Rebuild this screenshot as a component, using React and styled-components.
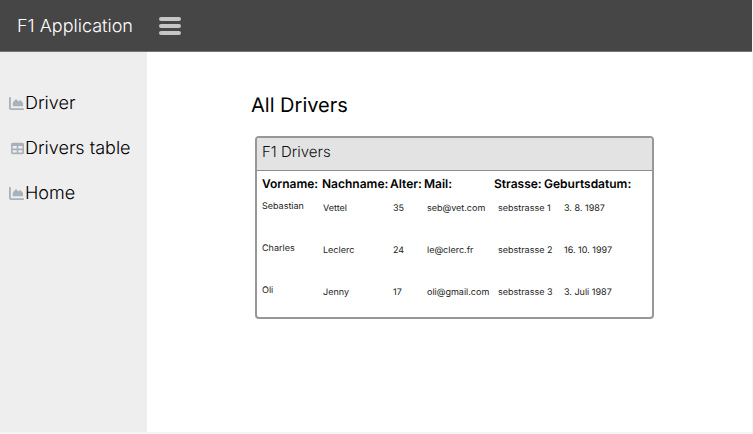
import React from "react";
import styled, { createGlobalStyle } from "styled-components";
import { FaChartArea, FaTable } from "react-icons/fa6";

const GlobalStyle = createGlobalStyle`
  *, *::before, *::after { box-sizing: border-box; }
  body {
    margin: 0;
    background: #f5f5f5;
    color: #000;
    font-family: Inter, "Liberation Sans", sans-serif;
    text-rendering: geometricPrecision;
  }
`;

const Page = styled.div`
  display: flex;
  flex-direction: column;
  min-height: 100vh;
  border-right: 1px solid #f5f5f5;
  border-bottom: 2px solid #f5f5f5;
`;

const TopBar = styled.header`
  display: flex;
  align-items: center;
  gap: 26px;
  height: 52px;
  padding: 0 17px;
  background: #464646;
  border-bottom: 1px solid #747474;
`;

const Brand = styled.span`
  color: #fff;
  font-size: 18px;
  font-weight: 300;
  line-height: 24px;
  padding-top: 2px;
`;

const MenuButton = styled.button`
  display: flex;
  flex-direction: column;
  gap: 3px;
  width: 22px;
  padding: 0;
  border: 0;
  background: none;
  cursor: pointer;
`;

const MenuBar = styled.span`
  height: 4px;
  border-radius: 2px;
  background: #c6c6c6;
`;

const Body = styled.div`
  display: flex;
  flex: 1;
`;

const Sidebar = styled.nav`
  flex: 0 0 147px;
  padding: 40px 9px;
  background: #eee;
`;

const NavList = styled.ul`
  display: flex;
  flex-direction: column;
  gap: 21px;
  margin: 0;
  padding: 0;
  list-style: none;
`;

const NavLink = styled.a`
  display: flex;
  align-items: center;
  color: #000;
  font-size: 18px;
  font-weight: 300;
  line-height: 24px;
  white-space: nowrap;
  text-decoration: none;
`;

const NavIcon = styled.span`
  display: flex;
  justify-content: flex-end;
  width: 15px;
  margin-right: 1px;
  padding-bottom: 2px;
  color: #a9b2ba;
`;

const Main = styled.main`
  flex: 1;
  padding: 41px 98px 40px 104px;
  background: #fff;
`;

const Title = styled.h1`
  margin: 0 0 19px;
  font-size: 20px;
  font-weight: 400;
  line-height: 24px;
`;

const Card = styled.section`
  margin-left: 4px;
  border: 2px solid #979797;
  border-radius: 4px;
  overflow: hidden;
  background: #fff;
`;

const CardTitle = styled.h2`
  margin: 0;
  padding: 4px 5px 8px;
  border-bottom: 1px solid #8c8c8c;
  background: #e3e3e3;
  color: #111;
  font-size: 15px;
  font-weight: 300;
  line-height: 20px;
`;

const Table = styled.table`
  width: 100%;
  table-layout: fixed;
  border-collapse: collapse;
`;

const Column = styled.col`
  width: ${({ $width }) => $width};
`;

const HeadCell = styled.th`
  padding: 5px 0 4px 5px;
  font-size: 12px;
  font-weight: 600;
  line-height: 16px;
  text-align: left;
  white-space: nowrap;
`;

const Cell = styled.td`
  height: 42px;
  padding: 7px 0 0 ${({ $indent }) => $indent};
  color: #222;
  font-size: 9px;
  line-height: 12px;
  vertical-align: top;
  white-space: nowrap;

  &:first-child {
    padding-top: 5px;
  }

  tr:last-child > & {
    height: 37px;
  }
`;

const links = [
  { label: "Driver", Icon: FaChartArea, size: 15 },
  { label: "Drivers table", Icon: FaTable, size: 13 },
  { label: "Home", Icon: FaChartArea, size: 15 },
];

const columns = [
  { label: "Vorname:", width: "60px", indent: "5px" },
  { label: "Nachname:", width: "68px", indent: "6px" },
  { label: "Alter:", width: "34px", indent: "8px" },
  { label: "Mail:", width: "70px", indent: "8px" },
  { label: "Strasse:", width: "50px", indent: "9px" },
  { label: "Geburtsdatum:", width: "auto", indent: "25px" },
];

const drivers = [
  ["Sebastian", "Vettel", "35", "seb@vet.com", "sebstrasse 1", "3. 8. 1987"],
  ["Charles", "Leclerc", "24", "le@clerc.fr", "sebstrasse 2", "16. 10. 1997"],
  ["Oli", "Jenny", "17", "oli@gmail.com", "sebstrasse 3", "3. Juli 1987"],
];

export default function App() {
  return (
    <>
      <GlobalStyle />
      <Page>
        <TopBar>
          <Brand>F1 Application</Brand>
          <MenuButton type="button" aria-label="Menu">
            <MenuBar />
            <MenuBar />
            <MenuBar />
          </MenuButton>
        </TopBar>
        <Body>
          <Sidebar>
            <NavList>
              {links.map(({ label, Icon, size }) => (
                <li key={label}>
                  <NavLink href="#">
                    <NavIcon>
                      <Icon size={size} aria-hidden="true" />
                    </NavIcon>
                    {label}
                  </NavLink>
                </li>
              ))}
            </NavList>
          </Sidebar>
          <Main>
            <Title>All Drivers</Title>
            <Card>
              <CardTitle>F1 Drivers</CardTitle>
              <Table>
                <colgroup>
                  {columns.map(({ label, width }) => (
                    <Column key={label} $width={width} />
                  ))}
                </colgroup>
                <thead>
                  <tr>
                    {columns.map(({ label }) => (
                      <HeadCell key={label} scope="col">{label}</HeadCell>
                    ))}
                  </tr>
                </thead>
                <tbody>
                  {drivers.map((driver) => (
                    <tr key={driver[0]}>
                      {driver.map((value, i) => (
                        <Cell key={columns[i].label} $indent={columns[i].indent}>{value}</Cell>
                      ))}
                    </tr>
                  ))}
                </tbody>
              </Table>
            </Card>
          </Main>
        </Body>
      </Page>
    </>
  );
}
